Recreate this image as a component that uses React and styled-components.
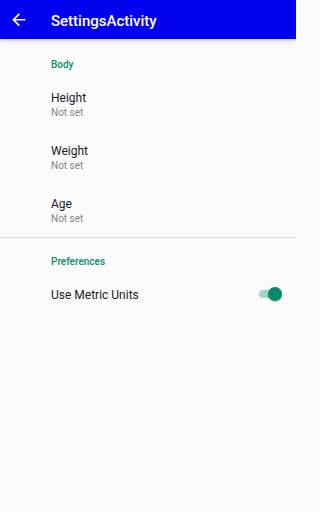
import React, { useState } from "react";
import styled, { createGlobalStyle } from "styled-components";

const GlobalStyle = createGlobalStyle`
  html, body {
    margin: 0;
    padding: 0;
    background: #fafafa;
  }
  body {
    font-family: Roboto, "Noto Sans", "Liberation Sans", sans-serif;
  }
`;

const teal = "#078a6d";

const Screen = styled.div`
  width: 296px;
  height: 512px;
  background: #fafafa;
  display: flex;
  flex-direction: column;
  overflow: hidden;
`;

const Toolbar = styled.header`
  height: 39px;
  flex-shrink: 0;
  background: #0202ee;
  display: flex;
  align-items: center;
  padding-left: 9px;
  box-shadow: 0 1px 4px rgba(0, 0, 0, 0.25);
  position: relative;
  z-index: 1;
`;

const BackButton = styled.button`
  width: 19.5px;
  height: 19.5px;
  padding: 0;
  border: 0;
  background: none;
  display: flex;
  color: #fff;

  svg {
    width: 100%;
    height: 100%;
  }
`;

const Title = styled.h1`
  margin: 0 0 0 22.5px;
  padding-top: 2px;
  font-size: 15px;
  font-weight: 500;
  color: #fff;
  line-height: 20px;
`;

const List = styled.div`
  padding-top: 2px;
`;

const Category = styled.div`
  padding: 17px 16px 6px 51px;
  font-size: 10px;
  line-height: 14px;
  font-weight: 500;
  color: ${teal};
`;

const Item = styled.div`
  display: flex;
  align-items: center;
  padding: 12.5px 14px 12.5px 51px;
`;

const Texts = styled.div`
  flex: 1;
  display: flex;
  flex-direction: column;
`;

const ItemTitle = styled.div`
  font-size: 12px;
  line-height: 15px;
  color: #222;
`;

const Summary = styled.div`
  font-size: 10px;
  line-height: 13px;
  color: #868686;
`;

const Divider = styled.hr`
  margin: 0;
  border: 0;
  height: 1px;
  background: #dcdcdc;
`;

const SwitchBox = styled.button`
  position: relative;
  width: 23px;
  height: 14px;
  padding: 0;
  border: 0;
  background: none;
  margin-top: -3px;
`;

const Track = styled.span`
  position: absolute;
  left: 0;
  top: 3px;
  width: 21px;
  height: 8px;
  border-radius: 4px;
  background: ${({ $on }) => ($on ? "#a2d6c8" : "#bdbdbd")};
`;

const Thumb = styled.span`
  position: absolute;
  top: 0;
  ${({ $on }) => ($on ? "right: 0;" : "left: 0;")}
  width: 14px;
  height: 14px;
  border-radius: 50%;
  background: ${({ $on }) => ($on ? teal : "#f1f1f1")};
  box-shadow: 0 1px 2px rgba(0, 0, 0, 0.25);
`;

function Switch({ on, onToggle }) {
  return (
    <SwitchBox onClick={onToggle} aria-pressed={on}>
      <Track $on={on} />
      <Thumb $on={on} />
    </SwitchBox>
  );
}

const bodyPrefs = ["Height", "Weight", "Age"];

export default function App() {
  const [metric, setMetric] = useState(true);

  return (
    <>
      <GlobalStyle />
      <Screen>
        <Toolbar>
          <BackButton aria-label="Back">
            <svg viewBox="0 0 24 24" fill="currentColor">
              <path d="M20 11H7.83l5.59-5.59L12 4l-8 8 8 8 1.41-1.41L7.83 13H20v-2z" />
            </svg>
          </BackButton>
          <Title>SettingsActivity</Title>
        </Toolbar>

        <List>
          <Category>Body</Category>
          {bodyPrefs.map((name) => (
            <Item key={name}>
              <Texts>
                <ItemTitle>{name}</ItemTitle>
                <Summary>Not set</Summary>
              </Texts>
            </Item>
          ))}
          <Divider />
          <Category>Preferences</Category>
          <Item>
            <Texts>
              <ItemTitle>Use Metric Units</ItemTitle>
            </Texts>
            <Switch on={metric} onToggle={() => setMetric(!metric)} />
          </Item>
        </List>
      </Screen>
    </>
  );
}
